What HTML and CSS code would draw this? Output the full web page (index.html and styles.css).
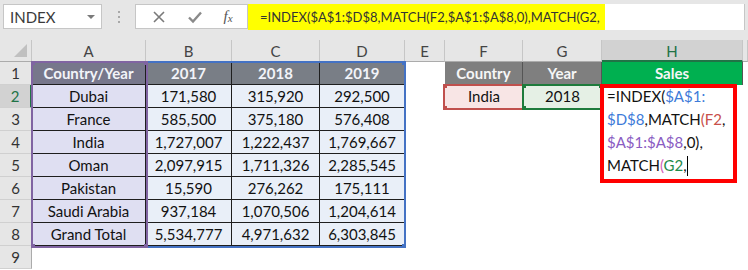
FILE: index.html
```html
<!DOCTYPE html>
<html lang="en">

<head>
    <meta charset="UTF-8">
    <title>INDEX MATCH</title>
    <link rel="stylesheet" href="styles.css">
</head>

<body>
    <!-- Barra de fórmulas -->
    <div class="toolbar">
        <div class="namebox">
            <span>INDEX</span>
            <span class="drop"></span>
        </div>
        <div class="grip"><i></i><i></i><i></i></div>
        <div class="buttons">
            <svg width="14" height="14" viewBox="0 0 14 14"><path d="M2 2L12 12M12 2L2 12" stroke="#7a7a7a" stroke-width="1.6" fill="none"/></svg>
            <svg width="16" height="14" viewBox="0 0 16 14"><path d="M2 7.5L6 11.5L14 2.5" stroke="#8a8a8a" stroke-width="2.4" fill="none"/></svg>
            <span class="fx">f<sub>x</sub></span>
        </div>
        <div class="formula">
            <span class="hl">=INDEX($A$1:$D$8,MATCH(F2,$A$1:$A$8,0),MATCH(G2,</span>
        </div>
    </div>

    <!-- Hoja -->
    <div class="sheet">
        <div class="corner"><span class="tri"></span></div>
        <div class="ch">A</div>
        <div class="ch">B</div>
        <div class="ch">C</div>
        <div class="ch">D</div>
        <div class="ch">E</div>
        <div class="ch">F</div>
        <div class="ch">G</div>
        <div class="ch sel">H</div>
        <div class="ch"></div>

        <div class="rh">1</div>
        <div class="t hd ha">Country/Year</div>
        <div class="t hd">2017</div>
        <div class="t hd">2018</div>
        <div class="t hd">2019</div>
        <div class="c"></div>
        <div class="c lk gray">Country</div>
        <div class="c lk gray">Year</div>
        <div class="c lk green">Sales</div>
        <div class="c"></div>

        <div class="rh sel">2</div>
        <div class="t ca">Dubai</div>
        <div class="t cb">171,580</div>
        <div class="t cb">315,920</div>
        <div class="t cb">292,500</div>
        <div class="c"></div>
        <div class="c pink">India</div>
        <div class="c mint">2018</div>
        <div class="c"></div>
        <div class="c"></div>

        <div class="rh">3</div>
        <div class="t ca">France</div>
        <div class="t cb">585,500</div>
        <div class="t cb">375,180</div>
        <div class="t cb">576,408</div>
        <div class="c"></div><div class="c"></div><div class="c"></div><div class="c"></div><div class="c"></div>

        <div class="rh">4</div>
        <div class="t ca">India</div>
        <div class="t cb">1,727,007</div>
        <div class="t cb">1,222,437</div>
        <div class="t cb">1,769,667</div>
        <div class="c"></div><div class="c"></div><div class="c"></div><div class="c"></div><div class="c"></div>

        <div class="rh">5</div>
        <div class="t ca">Oman</div>
        <div class="t cb">2,097,915</div>
        <div class="t cb">1,711,326</div>
        <div class="t cb">2,285,545</div>
        <div class="c"></div><div class="c"></div><div class="c"></div><div class="c"></div><div class="c"></div>

        <div class="rh">6</div>
        <div class="t ca">Pakistan</div>
        <div class="t cb">15,590</div>
        <div class="t cb">276,262</div>
        <div class="t cb">175,111</div>
        <div class="c"></div><div class="c"></div><div class="c"></div><div class="c"></div><div class="c"></div>

        <div class="rh">7</div>
        <div class="t ca">Saudi Arabia</div>
        <div class="t cb">937,184</div>
        <div class="t cb">1,070,506</div>
        <div class="t cb">1,204,614</div>
        <div class="c"></div><div class="c"></div><div class="c"></div><div class="c"></div><div class="c"></div>

        <div class="rh">8</div>
        <div class="t ca">Grand Total</div>
        <div class="t cb">5,534,777</div>
        <div class="t cb">4,971,632</div>
        <div class="t cb">6,303,845</div>
        <div class="c"></div><div class="c"></div><div class="c"></div><div class="c"></div><div class="c"></div>

        <div class="rh">9</div>
        <div class="c"></div><div class="c"></div><div class="c"></div><div class="c"></div><div class="c"></div>
        <div class="c"></div><div class="c"></div><div class="c"></div><div class="c"></div>

        <!-- Rangos de referencia (encima de las celdas) -->
        <div class="ref ref-blue">
            <i class="h tr"></i><i class="h br"></i>
        </div>
        <div class="ref ref-purple">
            <i class="h tl"></i><i class="h tr"></i><i class="h bl"></i><i class="h br"></i>
        </div>
        <div class="ref ref-red">
            <i class="h tl"></i><i class="h bl"></i>
        </div>
        <div class="ref ref-green">
            <i class="h tl"></i><i class="h bl"></i><i class="h tr"></i>
        </div>

        <!-- Celda H2 en modo edición -->
        <div class="editor">
            <div class="edit-text">=INDEX(<span class="k-blue">$A$1:<br>$D$8</span>,MATCH<span class="k-red">(F2</span>,<br><span class="k-purple">$A$1:$A$8</span>,0),<br>MATCH<span class="k-pink">(</span><span class="k-green">G2</span>,<span class="caret"></span></div>
        </div>
    </div>
</body>

</html>
```

FILE: styles.css
```css
:root {
    --chrome: #e6e6e6;
    --header-line: #ababab;
    --cell-line: #1e1e1e;
    --excel-green: #217346;
}

body {
    margin: 0;
    width: 748px;
    height: 270px;
    overflow: hidden;
    background: #ffffff;
    font-family: Lato, "Liberation Sans", sans-serif;
    color: #111111;
}

/* Barra de fórmulas */
.toolbar {
    height: 40px;
    box-sizing: border-box;
    padding: 4px 3px 0 3px;
    background: var(--chrome);
    display: flex;
    align-items: flex-start;
}

.namebox {
    width: 99px;
    height: 25px;
    box-sizing: border-box;
    background: #ffffff;
    border: 1px solid #c6c6c6;
    display: flex;
    align-items: center;
    justify-content: space-between;
    padding: 0 6px 0 6px;
    font-size: 15px;
    color: #3a3a3a;
}

.drop {
    width: 0;
    height: 0;
    border-left: 4px solid transparent;
    border-right: 4px solid transparent;
    border-top: 4px solid #7a7a7a;
}

.grip {
    width: 33px;
    height: 25px;
    display: flex;
    flex-direction: column;
    align-items: center;
    justify-content: center;
    gap: 3px;
}

.grip i {
    width: 2px;
    height: 2px;
    background: #a8a8a8;
}

.buttons {
    width: 113px;
    height: 25px;
    box-sizing: border-box;
    background: #ffffff;
    border: 1px solid #c6c6c6;
    display: flex;
    align-items: center;
    justify-content: space-around;
    padding: 0 4px 0 6px;
}

.fx {
    font-family: "Liberation Serif", serif;
    font-style: italic;
    font-size: 15px;
    color: #555555;
}

.fx sub {
    font-size: 11px;
    vertical-align: -1px;
}

.formula {
    width: 497px;
    height: 26px;
    box-sizing: border-box;
    background: #ffffff;
    border-right: 1px solid #c6c6c6;
    display: flex;
}

.hl {
    width: 357px;
    height: 26px;
    box-sizing: border-box;
    background: #ffff00;
    padding-left: 12px;
    line-height: 26px;
    font-size: 13px;
    color: #333333;
    white-space: nowrap;
}

/* Hoja */
.sheet {
    position: relative;
    display: grid;
    grid-template-columns: 32px 114px 86px 88px 85px 40px 78px 79px 141px 1fr;
    grid-template-rows: 22px repeat(9, 23px);
    font-size: 15px;
}

.sheet > div {
    box-sizing: border-box;
    text-align: center;
    white-space: nowrap;
    overflow: hidden;
}

.corner {
    background: var(--chrome);
    border-right: 1px solid #c6c6c6;
    border-bottom: 1px solid var(--header-line);
    position: relative;
}

.tri {
    position: absolute;
    right: 4px;
    bottom: 4px;
    width: 0;
    height: 0;
    border-left: 13px solid transparent;
    border-bottom: 13px solid #c0c0c0;
}

.ch {
    background: var(--chrome);
    border-right: 1px solid #c6c6c6;
    border-bottom: 1px solid var(--header-line);
    line-height: 22px;
    font-size: 15px;
    color: #444444;
}

.ch.sel {
    background: #d2d2d2;
    color: var(--excel-green);
    border-bottom: 2px solid var(--excel-green);
}

.rh {
    background: var(--chrome);
    border-right: 1px solid var(--header-line);
    border-bottom: 1px solid #d0d0d0;
    line-height: 23px;
    font-size: 15px;
    color: #333333;
}

.rh.sel {
    background: #d2d2d2;
    color: var(--excel-green);
    border-right: 2px solid var(--excel-green);
}

.c {
    line-height: 23px;
}

.t {
    line-height: 23px;
    border-right: 1px solid var(--cell-line);
    border-bottom: 1px solid var(--cell-line);
}

.hd {
    background: #797e86;
    color: #f2f4f9;
    font-weight: bold;
}

.hd.ha {
    background: #77778b;
}

.ca {
    background: #dfdff2;
}

.cb {
    background: #e9eff8;
}

.lk {
    color: #f6f6f6;
    font-weight: bold;
    border-right: 1px solid #555555;
}

.gray {
    background: #7f7f7f;
}

.green {
    background: #00b050;
}

.pink {
    background: #f8e5e5;
}

.mint {
    background: #e5f0e5;
}

/* Marcos de referencia */
.ref {
    position: absolute;
    box-sizing: border-box;
    border: 2px solid;
}

.ref-blue {
    left: 31px;
    top: 21px;
    width: 375px;
    height: 187px;
    border-color: #4472c4;
}

.ref-purple {
    left: 31px;
    top: 21px;
    width: 117px;
    height: 187px;
    border-color: #8064a2;
}

.ref-red {
    left: 443px;
    top: 44px;
    width: 81px;
    height: 26px;
    border-color: #c0504d;
}

.ref-green {
    left: 522px;
    top: 44px;
    width: 81px;
    height: 26px;
    border-color: #1e7b3c;
}

.h {
    position: absolute;
    width: 5px;
    height: 5px;
}

.ref-blue .h { background: #4472c4; }
.ref-purple .h { background: #8064a2; }
.ref-red .h { background: #c0504d; }
.ref-green .h { background: #1e7b3c; }

.tl { left: -3px; top: -3px; }
.tr { right: -3px; top: -3px; }
.bl { left: -3px; bottom: -3px; }
.br { right: -3px; bottom: -3px; }

.sheet > .editor {
    position: absolute;
    left: 600px;
    top: 44px;
    width: 137px;
    height: 99px;
    box-sizing: border-box;
    border: 4px solid #ff0000;
    background: #ffffff;
    text-align: left;
}

.edit-text {
    margin-top: -3px;
    padding-left: 3px;
    line-height: 23px;
    font-size: 15px;
    color: #111111;
    white-space: nowrap;
}

.k-blue { color: #3d7bd9; }
.k-red { color: #c8504a; }
.k-purple { color: #8a5cc2; }
.k-pink { color: #d263b8; }
.k-green { color: #1e8a4a; }

.caret {
    display: inline-block;
    width: 0;
    height: 20px;
    border-left: 1px solid #000000;
    vertical-align: -5px;
}
```
